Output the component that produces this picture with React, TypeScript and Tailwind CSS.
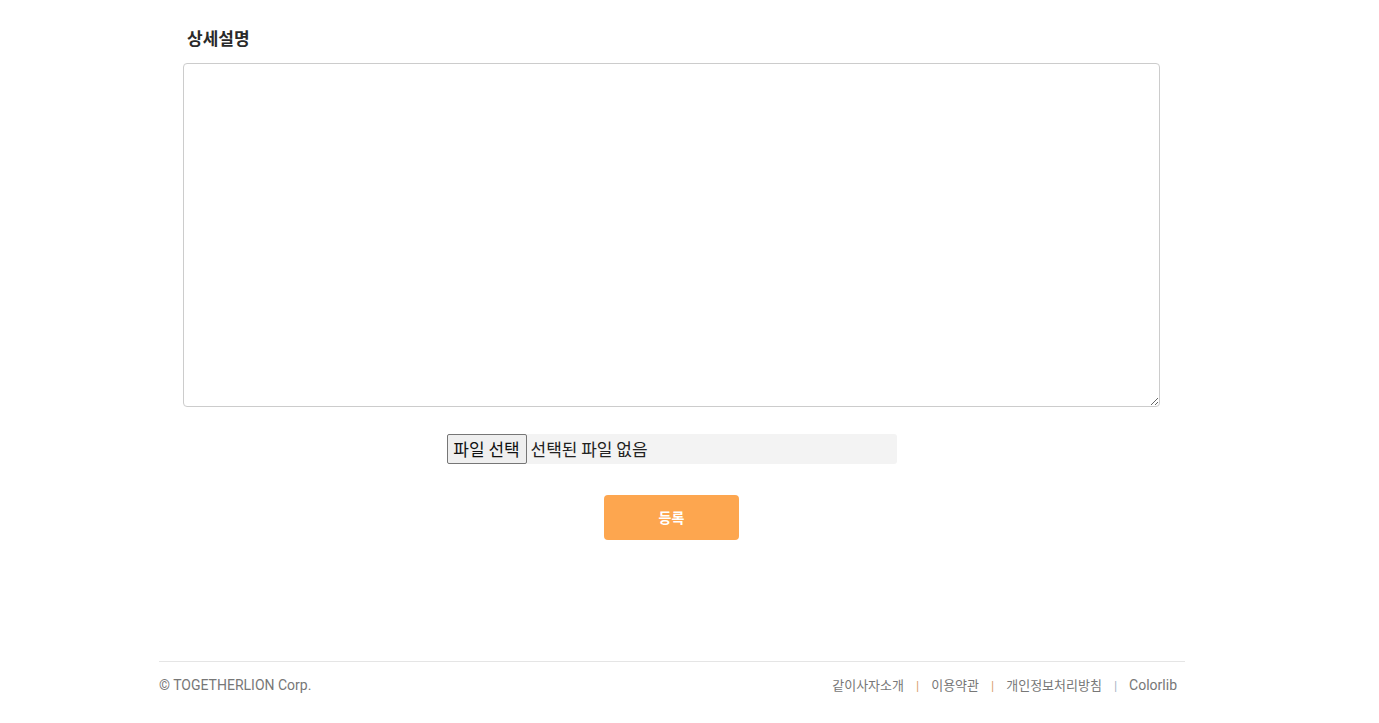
import React from "react";

export default function App() {
  const kr = { fontFamily: '"Noto Sans CJK KR", "Noto Sans", sans-serif' };
  const foot = { fontFamily: 'Roboto, "Noto Sans CJK KR", sans-serif' };
  return (
    <div className="min-h-[723px] w-full bg-white" style={kr}>
      <div className="ml-[183px] w-[977px] pt-[26px]">
        <h3 className="pl-[4px] text-[17px] font-bold leading-[24px] text-[#2a2a2a]">상세설명</h3>
        <textarea className="mt-[13px] block h-[344px] w-[977px] resize-y rounded-[4px] border border-[#ccc] bg-white p-2 outline-none" />
        <div className="mt-[27px] flex justify-center">
          <div className="flex h-[30px] w-[450px] items-center rounded-[3px] bg-[#f3f3f3]">
            <div className="flex h-[30px] w-[80px] items-center justify-center rounded-[2px] border border-[#767676] bg-[#efefef] text-[17px] text-[#111]">
              파일 선택
            </div>
            <span className="ml-[4px] text-[17px] text-[#222]">선택된 파일 없음</span>
          </div>
        </div>
        <div className="mt-[31px] flex justify-center">
          <button className="h-[45px] w-[135px] rounded-[4px] bg-[#fda64f] text-[14px] font-bold text-white">
            등록
          </button>
        </div>
      </div>
      <footer className="ml-[159px] mt-[121px] w-[1026px] border-t border-[#e5e5e5]" style={foot}>
        <div className="flex h-[47px] items-center justify-between pr-[8px] text-[13px] text-[#777]">
          <span className="text-[14px]">© TOGETHERLION Corp.</span>
          <div className="flex items-center">
            <span>같이사자소개</span>
            <span className="mx-[12px] text-[#d9a070]">|</span>
            <span>이용약관</span>
            <span className="mx-[12px] text-[#d9a070]">|</span>
            <span>개인정보처리방침</span>
            <span className="mx-[12px] text-[#aab4c8]">|</span>
            <span className="text-[14px]">Colorlib</span>
          </div>
        </div>
      </footer>
    </div>
  );
}
